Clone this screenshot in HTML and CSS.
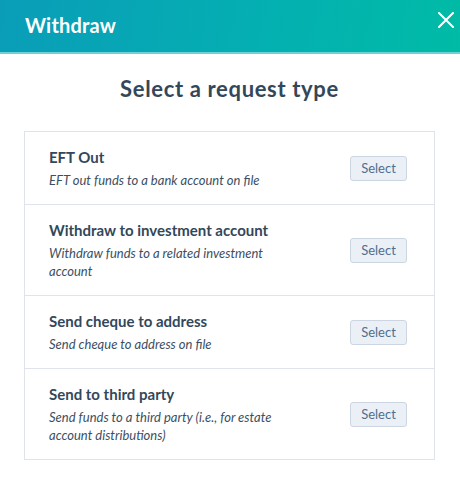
FILE: index.html
```html
<!DOCTYPE html>
<html lang="en">
<head>
<meta charset="utf-8">
<link rel="stylesheet" href="styles.css">
</head>
<body>
<div class="modal">
  <header class="modal-header">
    <h1 class="modal-title">Withdraw</h1>
    <button class="close" aria-label="Close">
      <svg width="16" height="16" viewBox="0 0 16 16"><path d="M1 1 L15 15 M15 1 L1 15" stroke="#fff" stroke-width="2" stroke-linecap="round" fill="none"/></svg>
    </button>
  </header>
  <main class="modal-body">
    <h2 class="heading">Select a request type</h2>
    <div class="card">
      <div class="row">
        <div class="text">
          <div class="title">EFT Out</div>
          <div class="desc">EFT out funds to a bank account on file</div>
        </div>
        <button class="select">Select</button>
      </div>
      <div class="row">
        <div class="text">
          <div class="title">Withdraw to investment account</div>
          <div class="desc">Withdraw funds to a related investment account</div>
        </div>
        <button class="select">Select</button>
      </div>
      <div class="row">
        <div class="text">
          <div class="title">Send cheque to address</div>
          <div class="desc">Send cheque to address on file</div>
        </div>
        <button class="select">Select</button>
      </div>
      <div class="row">
        <div class="text">
          <div class="title">Send to third party</div>
          <div class="desc">Send funds to a third party (i.e., for estate account distributions)</div>
        </div>
        <button class="select">Select</button>
      </div>
    </div>
  </main>
</div>
</body>
</html>
```

FILE: styles.css
```css
* { box-sizing: border-box; }
html, body { margin: 0; padding: 0; background: #fff; }
body { font-family: "Lato", "Noto Sans", sans-serif; color: #33475b; }

.modal-header {
  height: 54px;
  display: flex;
  align-items: center;
  justify-content: space-between;
  padding: 0 6px 0 25px;
  background: linear-gradient(100deg, #0a9db8 0%, #04afb2 55%, #00bba6 100%);
  border-bottom: 2px solid #6fd0d6;
}
.modal-title {
  margin: 0;
  font-size: 20px;
  font-weight: 700;
  color: #fff;
  letter-spacing: 0.2px;
  padding-bottom: 2px;
}
.close {
  background: none;
  border: 0;
  padding: 0;
  width: 16px;
  height: 16px;
  margin-bottom: 12px;
  display: flex;
}

.modal-body { padding: 23px 25px 0 24px; }
.heading {
  margin: 0 0 30px;
  text-align: center;
  font-size: 22px;
  line-height: 24px;
  font-weight: 700;
  letter-spacing: 0.65px;
}
.card {
  border: 1px solid #dfe3eb;
  width: 411px;
}
.row {
  display: flex;
  align-items: center;
  justify-content: space-between;
  padding: 15px 27px 15px 24px;
}
.row + .row { border-top: 1px solid #dfe3eb; }
.text { width: 250px; }
.title {
  font-size: 15px;
  line-height: 20px;
  font-weight: 700;
  margin-bottom: 4px;
}
.desc {
  font-size: 13px;
  line-height: 18px;
  font-style: italic;
  color: #3b4f63;
}
.select {
  width: 57px;
  height: 25px;
  padding: 0;
  background: #eaf0f6;
  border: 1px solid #cbd6e2;
  border-radius: 3px;
  color: #506e91;
  font-family: inherit;
  font-size: 13px;
}
```
